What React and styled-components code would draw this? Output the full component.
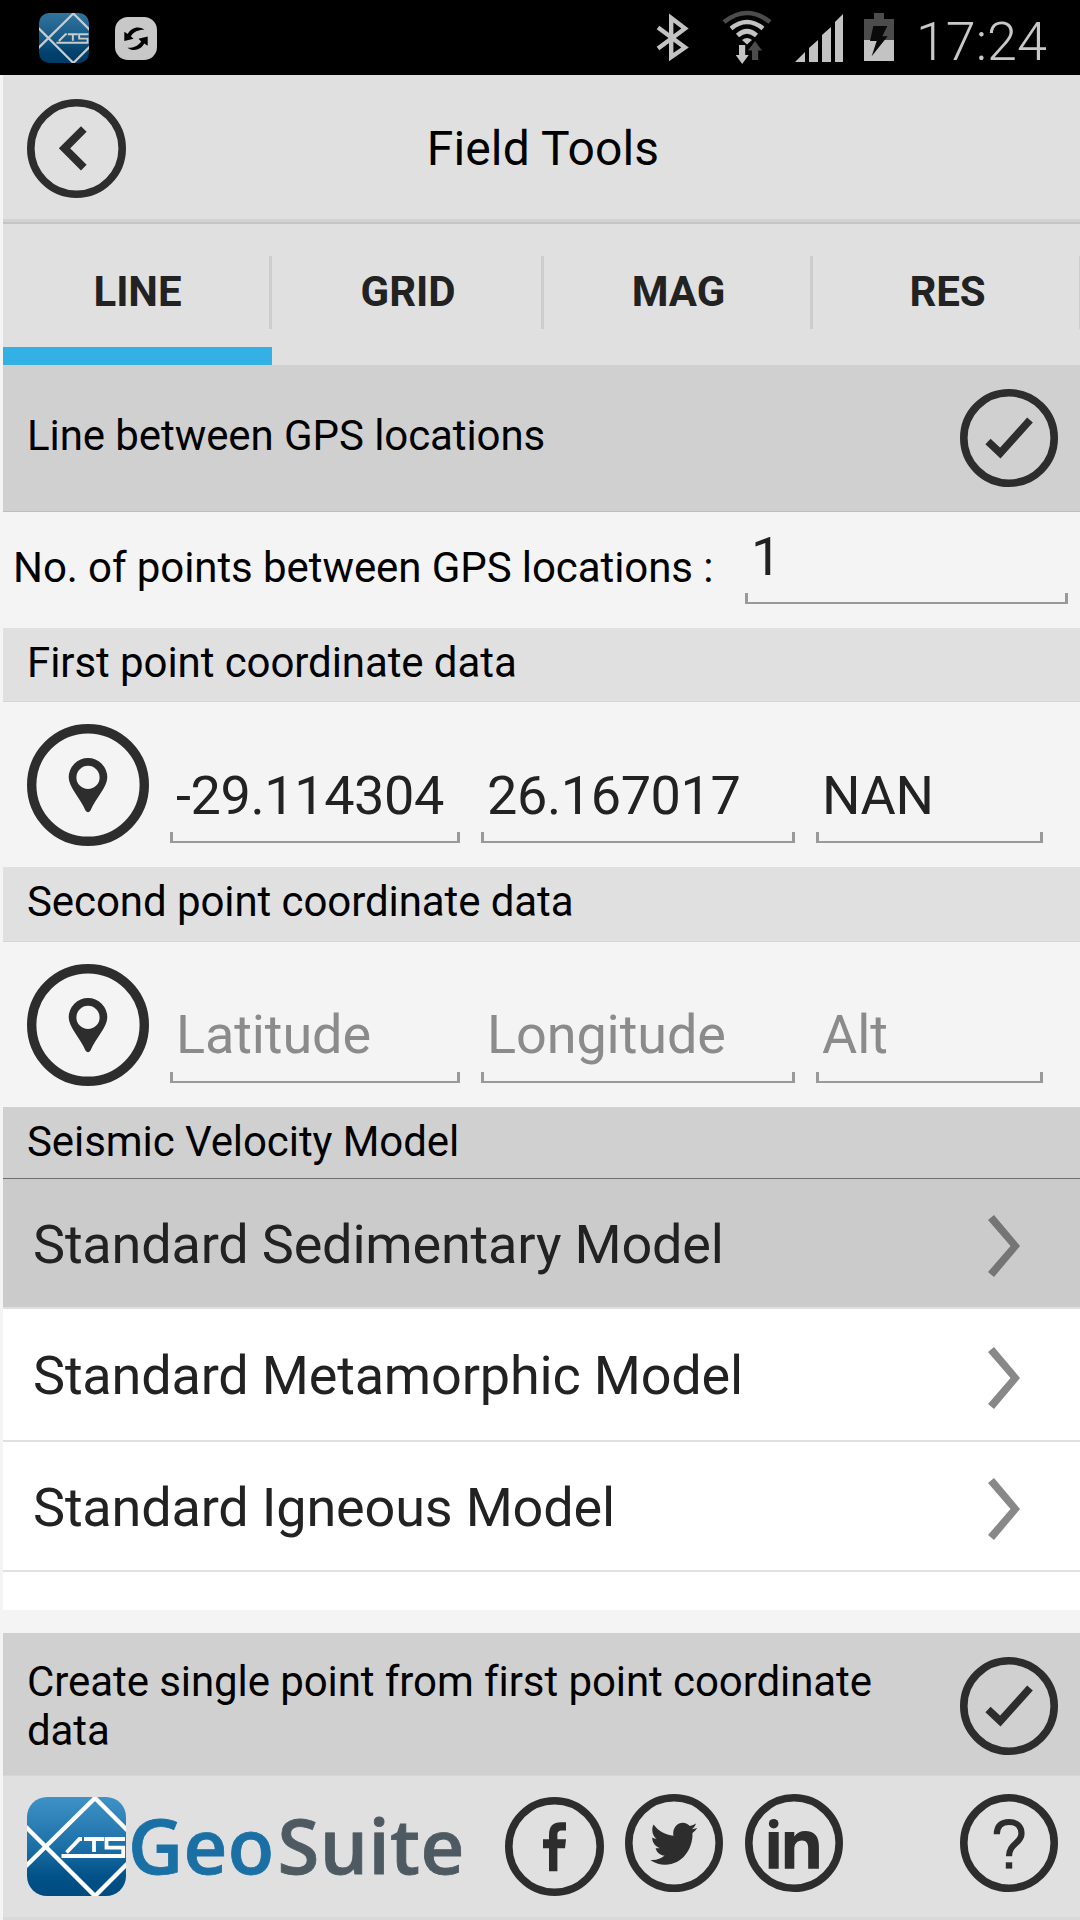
import React from "react";
import styled, { createGlobalStyle } from "styled-components";
import { FaTwitter } from "react-icons/fa";

// styles
const GlobalStyle = createGlobalStyle`
  * {
    box-sizing: border-box;
  }
  body {
    margin: 0;
    background: #f4f4f4;
    font-family: Roboto, "Liberation Sans", sans-serif;
    font-variant-ligatures: none;
  }
  svg {
    display: block;
    flex: none;
  }
`;

const Screen = styled.div`
  width: 1080px;
  height: 1920px;
  overflow: hidden;
  display: flex;
  flex-direction: column;
  color: #000;
  font-size: 42px;
  letter-spacing: -0.08px;
`;

const StatusBar = styled.div`
  height: 75px;
  flex: none;
  background: #000;
  display: flex;
  align-items: flex-start;
  padding-left: 39px;
`;

const StatusSlot = styled.div`
  margin: ${(p) => p.$top}px 0 0 ${(p) => p.$gap}px;
  opacity: ${(p) => (p.$dim ? 0.8 : 1)};
`;

const Clock = styled.span`
  margin-left: 22px;
  color: #c8c8c8;
  font-size: 54px;
  font-weight: 300;
  line-height: 83px;
`;

const Page = styled.main`
  flex: 1;
  display: flex;
  flex-direction: column;
  margin-left: 3px;
`;

const Header = styled.header`
  height: 149px;
  display: grid;
  grid-template-columns: 132px 1fr 132px;
  align-items: center;
  background: #e0e0e0;
  border-bottom: 2px solid #c5c5c5;
  box-shadow: inset 0 -3px #d2d2d2;
  padding: 0 0 0 24px;
`;

const Title = styled.h1`
  margin: 0;
  padding-right: 21px;
  text-align: center;
  font-size: 48px;
  font-weight: 400;
  letter-spacing: 0.15px;
`;

const Tabs = styled.nav`
  height: 141px;
  display: grid;
  grid-template-columns: 269px 272px 269px 269px;
  background: #e0e0e0;
`;

const Tab = styled.div`
  display: flex;
  align-items: center;
  justify-content: center;
  padding-bottom: 6px;
  color: #222;
  font-weight: 700;
  background: linear-gradient(#cdcdcd, #cdcdcd) right top 32px / 3px 73px no-repeat;
  box-shadow: ${(p) => (p.$active ? "inset 0 -18px #33b1e4" : "none")};
`;

const Band = styled.div`
  height: ${(p) => p.$height}px;
  flex: none;
  display: flex;
  align-items: center;
  justify-content: space-between;
  background: ${(p) => (p.$dark ? "#d0d0d0" : "#e0e0e0")};
  border-bottom: 1px solid ${(p) => p.$line || "#d6d6d6"};
  padding: ${(p) => p.$drop || 0}px 22px 0 24px;
`;

const BandText = styled.span`
  padding-bottom: ${(p) => p.$lift || 0}px;
  line-height: 49px;
`;

const PointsRow = styled.div`
  height: 116px;
  display: flex;
  align-items: flex-start;
  padding-left: 10px;
`;

const PointsLabel = styled.label`
  width: 732px;
  line-height: 111px;
`;

const CoordRow = styled.div`
  height: 165px;
  display: flex;
  align-items: flex-start;
  padding: 22px 0 0 24px;
`;

const Field = styled.input`
  width: ${(p) => p.$width}px;
  height: ${(p) => p.$height || 95}px;
  margin: ${(p) => p.$margin || "0"};
  padding: 0 6px ${(p) => p.$lift || 0}px;
  border: 0;
  outline: 0;
  color: #222;
  font: 54px Roboto, sans-serif;
  letter-spacing: -0.4px;
  background:
    linear-gradient(#999, #999) left bottom / 3px 11px no-repeat,
    linear-gradient(#999, #999) right bottom / 3px 11px no-repeat,
    linear-gradient(#999, #999) left bottom / 100% 2px no-repeat;
  &::placeholder {
    color: #8b8b8b;
    opacity: 1;
    letter-spacing: -0.1px;
  }
  &:placeholder-shown {
    padding-bottom: 2px;
  }
`;

const ModelList = styled.div`
  height: 431px;
  flex: none;
  overflow: hidden;
  background: #fff;
  margin-bottom: 23px;
`;

const ModelItem = styled.div`
  height: ${(p) => p.$height}px;
  display: flex;
  align-items: center;
  justify-content: space-between;
  padding: 2px 60px 0 30px;
  color: ${(p) => (p.$selected ? "#757575" : "#888")};
  background: ${(p) => (p.$selected ? "#cbcbcb" : "#fff")};
  border-bottom: 2px solid #e0e0e0;
  svg {
    margin-top: 4px;
  }
`;

const ModelName = styled.span`
  color: #222;
  font-size: 54px;
  letter-spacing: -0.18px;
`;

const Footer = styled.footer`
  height: 144px;
  display: flex;
  align-items: flex-start;
  padding: 18px 0 0 24px;
  background: #e0e0e0;
  box-shadow: inset 0 -3px #d9d9d9;
`;

const Brand = styled.div`
  width: 478px;
  display: flex;
  align-items: flex-start;
  padding-top: 3px;
  color: #4e5a61;
  font: 600 76px/96px "Open Sans", "Noto Sans", sans-serif;
  letter-spacing: 0.4px;
  -webkit-text-stroke: 0.8px currentColor;
  span {
    color: #1a70a4;
    margin-left: 2px;
  }
  b {
    font-weight: 600;
    margin-left: 3px;
  }
`;

const Social = styled.div`
  margin: ${(p) => p.$margin};
`;
// end styles

const Ring = ({ size = 98, stroke = 7.6, children }) => (
  <svg width={size} height={size} viewBox={`0 0 ${size} ${size}`} fill="none">
    <circle
      cx={size / 2}
      cy={size / 2}
      r={(size - stroke) / 2}
      stroke="#2d2d2d"
      strokeWidth={stroke}
    />
    {children}
  </svg>
);

const CheckRing = () => (
  <Ring>
    <path d="M28 52.5L40.3 64L70 31" stroke="#2d2d2d" strokeWidth="7.6" />
  </Ring>
);

const PinRing = () => (
  <Ring size={122} stroke={9.4}>
    <path
      fill="#2d2d2d"
      fillRule="evenodd"
      d="M61 34a19.3 19.3 0 0 1 19.3 19.3C80.3 63 69 74 63.5 86.5Q61 90 58.5 86.5C53 74 41.7 63 41.7 53.3A19.3 19.3 0 0 1 61 34ZM61 41.8a11.6 11.6 0 1 0 0 23.2a11.6 11.6 0 0 0 0-23.2Z"
    />
  </Ring>
);

const Logo = ({ id, size }) => (
  <svg width={size} height={size} viewBox="0 0 99 99" fill="none">
    <defs>
      <linearGradient id={id} x1="0" y1="0" x2="0" y2="1">
        <stop offset="0" stopColor="#3f92c6" />
        <stop offset="0.5" stopColor="#1c70a8" />
        <stop offset="0.8" stopColor="#005288" />
        <stop offset="1" stopColor="#004a80" />
      </linearGradient>
      <clipPath id={`${id}-clip`}>
        <rect width="99" height="99" rx="20" />
      </clipPath>
    </defs>
    <g clipPath={`url(#${id}-clip)`} stroke="#fff">
      <rect width="99" height="99" fill={`url(#${id})`} stroke="none" />
      <path d="M-2 29L68 99L101 66M-2 70L68 1L101 34" strokeWidth="4.4" />
      <path
        d="M55 42H52.5L39.5 55.5M34.5 59H96.2V50.7H79.5V42H98M57 42H77M67 42V55"
        strokeWidth="3.8"
      />
    </g>
  </svg>
);

const SyncIcon = () => (
  <svg width="42" height="43" viewBox="0 0 42 43">
    <rect width="42" height="43" rx="13" fill="#c8c8c8" />
    <path
      id="sync-arrow"
      d="M29.5 12.8C24 8.5 16 10.5 12.8 17L9.3 14.8V24L18.5 21.8L15.8 19.2C19 14.5 24 12.5 29.5 12.8Z"
    />
    <use href="#sync-arrow" transform="rotate(180 21 21.8)" />
  </svg>
);

const BluetoothIcon = () => (
  <svg width="36" height="50" viewBox="0 0 36 50" fill="none">
    <path
      d="M4 14.5L31 34.5L17.2 44V5L31 15.5L4 35.5"
      stroke="#c3c3c3"
      strokeWidth="4.4"
    />
  </svg>
);

const WifiIcon = () => (
  <svg width="50" height="54" viewBox="0 0 50 54" fill="none">
    <path d="M2 12Q25-6 48 12" stroke="#4c4c4c" strokeWidth="4.5" />
    <path
      d="M9 18.5Q25 5.5 41 18.5M15.5 25.5Q25 17 34.5 25.5"
      stroke="#c3c3c3"
      strokeWidth="4.6"
    />
    <path
      d="M20 30Q25 26 30 30L25 34.5ZM17 35H23.2V45H26.7L20.2 54L13.7 45H17Z"
      fill="#c3c3c3"
    />
    <path d="M33 31L40 40.5H36.2V50H30V40.5H26Z" fill="#4c4c4c" />
  </svg>
);

const SignalIcon = () => (
  <svg width="48" height="48" viewBox="0 0 144 144" fill="#c3c3c3">
    <path d="M0 144L30 114V144ZM42 102L69 78V144H42ZM81 63L108 39V144H81ZM120 24L144 0V144H120Z" />
  </svg>
);

const BatteryIcon = () => (
  <svg width="30" height="48" viewBox="0 0 90 144">
    <path d="M0 18H30V0H60V18H90V81H0Z" fill="#4c4c4c" />
    <path d="M0 81H90V144H0Z" fill="#c3c3c3" />
    <path d="M28 39H70L55 70H71L23 130L38 84H18Z" fill="#0a0a0a" />
  </svg>
);

const Chevron = () => (
  <svg width="32" height="62" viewBox="0 0 32 62">
    <path d="M6 0L32 31L6 62L0 57L22.5 31L0 5Z" fill="currentColor" />
  </svg>
);

const tabs = ["LINE", "GRID", "MAG", "RES"];

const models = [
  { name: "Standard Sedimentary Model", height: 130 },
  { name: "Standard Metamorphic Model", height: 133 },
  { name: "Standard Igneous Model", height: 130 },
  { name: "", height: 134 },
];

const CoordinateFields = ({ values = [] }) => (
  <CoordRow>
    <PinRing />
    <Field $width={290} $margin="24px 0 0 21px" placeholder="Latitude" defaultValue={values[0]} />
    <Field $width={314} $margin="24px 0 0 21px" placeholder="Longitude" defaultValue={values[1]} />
    <Field $width={227} $margin="24px 0 0 21px" placeholder="Alt" defaultValue={values[2]} />
  </CoordRow>
);

const App = () => {
  return (
    <Screen>
      <GlobalStyle />
      <StatusBar>
        <StatusSlot $top={13} $gap={0} $dim>
          <Logo id="status-logo" size={50} />
        </StatusSlot>
        <StatusSlot $top={17} $gap={26}>
          <SyncIcon />
        </StatusSlot>
        <StatusSlot $top={13} $gap={497}>
          <BluetoothIcon />
        </StatusSlot>
        <StatusSlot $top={10} $gap={32}>
          <WifiIcon />
        </StatusSlot>
        <StatusSlot $top={14} $gap={23}>
          <SignalIcon />
        </StatusSlot>
        <StatusSlot $top={13} $gap={21}>
          <BatteryIcon />
        </StatusSlot>
        <Clock>17:24</Clock>
      </StatusBar>

      <Page>
        <Header>
          <Ring size={99}>
            <path d="M56.8 30L37.5 49.3L56.8 68.6" stroke="#2d2d2d" strokeWidth="8" />
          </Ring>
          <Title>Field Tools</Title>
        </Header>

        <Tabs>
          {tabs.map((tab, i) => (
            <Tab key={tab} $active={i === 0}>
              {tab}
            </Tab>
          ))}
        </Tabs>

        <Band $height={147} $dark $line="#bdbdbd">
          <BandText $lift={5}>Line between GPS locations</BandText>
          <CheckRing />
        </Band>

        <PointsRow>
          <PointsLabel>No. of points between GPS locations :</PointsLabel>
          <Field $width={323} $height={92} $lift={3} defaultValue="1" />
        </PointsRow>

        <Band $height={74}>
          <BandText $lift={5}>First point coordinate data</BandText>
        </Band>
        <CoordinateFields values={["-29.114304", "26.167017", "NAN"]} />

        <Band $height={75}>
          <BandText $lift={5}>Second point coordinate data</BandText>
        </Band>
        <CoordinateFields />

        <Band $height={72} $dark $line="#6f6f6f">
          <BandText $lift={2}>Seismic Velocity Model</BandText>
        </Band>
        <ModelList>
          {models.map((model, i) => (
            <ModelItem key={i} $height={model.height} $selected={i === 0}>
              <ModelName>{model.name}</ModelName>
              <Chevron />
            </ModelItem>
          ))}
        </ModelList>

        <Band $height={143} $drop={4} $dark>
          <BandText>
            Create single point from first point coordinate
            <br />
            data
          </BandText>
          <CheckRing />
        </Band>

        <Footer>
          <Brand>
            <Logo id="brand-logo" size={99} />
            <span>Geo</span>
            <b>Suite</b>
          </Brand>
          <Social $margin="3px 0 0">
            <Ring size={99}>
              <path
                fill="#2d2d2d"
                d="M44 74.3V51.3H38V42.3H44V38C44 29 48 25.3 56 25.3H61V33.5H57C53.5 33.5 52.4 35 52.4 38V42.3H61L60 51.3H52.4V74.3Z"
              />
            </Ring>
          </Social>
          <Social $margin="0 0 0 21px">
            <Ring>
              <g transform="translate(25.3 23.8) scale(1 1.1)">
                <FaTwitter size={47} color="#2d2d2d" />
              </g>
            </Ring>
          </Social>
          <Social $margin="0 0 0 22px">
            <Ring>
              <circle cx="28.7" cy="29.7" r="4.8" fill="#2d2d2d" />
              <path
                fill="#2d2d2d"
                d="M23.7 38H33.7V74.7H23.7ZM39.8 38H49.3V42.5C51.5 39 55.5 37 60 37C69.5 37 73.9 42.5 73.9 52V74.7H63.2V54.5C63.2 49.5 61.5 46.5 57 46.5C52 46.5 49.3 50 49.3 55V74.7H39.8Z"
              />
            </Ring>
          </Social>
          <Social $margin="0 0 0 117px">
            <Ring>
              <path
                d="M36.8 40.3C36.8 31.5 42 28 49 28C57 28 61.5 33 61.5 39.5C61.5 49.5 49 49.5 49 62.3"
                stroke="#2d2d2d"
                strokeWidth="6.2"
              />
              <path d="M45.8 68.3H52.2V74.6H45.8Z" fill="#2d2d2d" />
            </Ring>
          </Social>
        </Footer>
      </Page>
    </Screen>
  );
};

export default App;
